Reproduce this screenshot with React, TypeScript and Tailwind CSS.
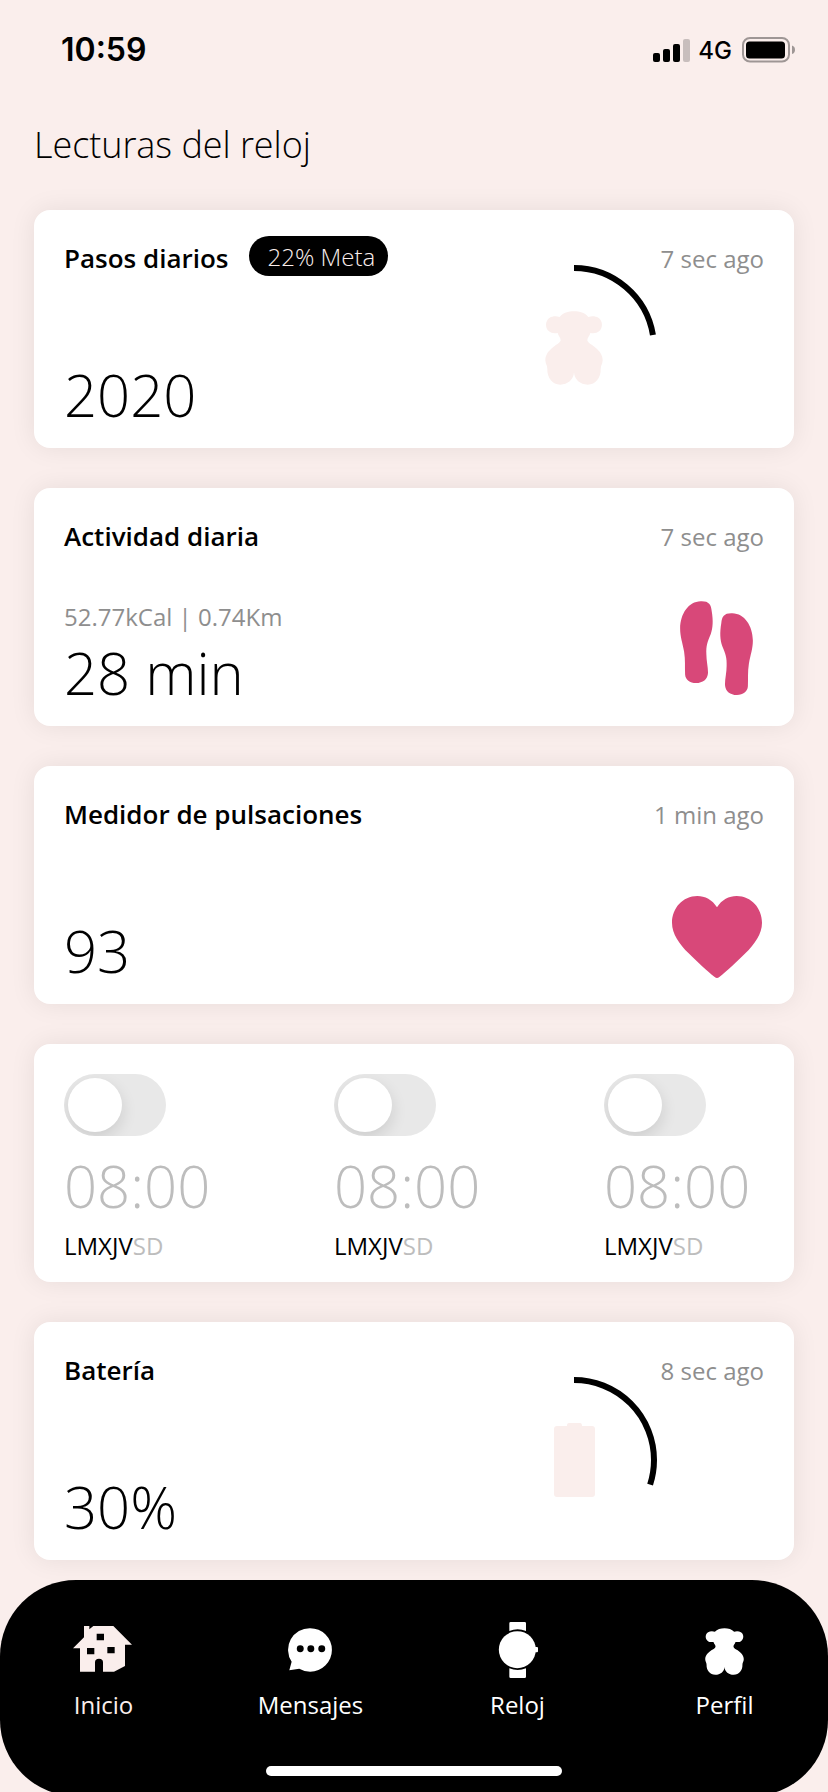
import type { ReactNode } from "react"
import { clsx } from "clsx"

const BEAR_PATH =
  "M44 18C54 6 70 1 87 1C104 1 120 6 130 18C140 14 152 15 160 20C174 29 174 50 163 60C155 68 144 67 136 66C135 74 127 79 127 88C128 95 138 100 144 104C160 116 173 128 173 148C173 158 167 163 167 174C168 200 152 221 128 221C106 221 88 206 87 184C86 206 68 221 46 221C22 221 6 200 7 174C7 163 1 158 1 148C1 128 14 116 30 104C36 100 46 95 47 88C47 79 39 74 38 66C30 67 19 68 11 60C0 50 0 29 14 20C22 15 34 14 44 18Z"

const FOOT_PATH =
  "M302 123C326 122 333 132 335 152C340 182 339 202 332 222C322 246 318 256 319 282C319 302 324 320 324 338C323 358 308 369 288 369C269 369 256 359 255 343C254 320 256 300 252 275C247 246 240 230 240 205C241 160 265 124 302 123Z"

function BearIcon({ className }: { className?: string }) {
  return (
    <svg viewBox="0 0 174 222" preserveAspectRatio="none" className={className} fill="currentColor">
      <path d={BEAR_PATH} />
    </svg>
  )
}

function HouseIcon() {
  return (
    <svg viewBox="219 198 177 138" className="mr-[2px] mb-[2px] w-[59px] h-[46px] text-[#faeeec]" fill="currentColor">
      <path
        fillRule="evenodd"
        d="M252 198H268V208L280 198H340L396 254H375V318L342 335H309V307Q309 296 297 296Q285 296 285 307V335H240V265H219L252 232ZM290 221V241H312V221ZM261 264V283H283V264ZM322 261V280H344V261Z"
      />
    </svg>
  )
}

function MessageIcon() {
  return (
    <svg viewBox="863 203 133 133" className="mr-[2px] w-[44px] h-[44px]">
      <path
        fill="white"
        d="M930 203.500A65.500 65.500 0 1 1 930 335Q912 335 897 326L867 331L874 305A65.500 65.500 0 0 1 930 203.500Z"
      />
      <circle cx="900" cy="266" r="10.500" />
      <circle cx="932" cy="266" r="10.500" />
      <circle cx="965" cy="266" r="10.500" />
    </svg>
  )
}

function WatchIcon() {
  return (
    <svg viewBox="246 186 123 168" className="w-[41px] h-[56px]" fill="white">
      <circle cx="307" cy="269" r="55.500" />
      <path d="M360 261H366Q369 261 369 264V274Q369 277 366 277H360Z" />
      <path d="M283 190Q283 186 287 186H329Q333 186 333 190V213Q308 203 283 213Z" />
      <path d="M283 350Q283 354 287 354H329Q333 354 333 350V325Q308 335 283 325Z" />
    </svg>
  )
}

function FootprintsIcon() {
  return (
    <svg viewBox="240 122 219 283" className="w-[73px] h-[94px]" fill="#d84879">
      <path d={FOOT_PATH} />
      <path d={FOOT_PATH} transform="translate(699 36) scale(-1 1)" />
    </svg>
  )
}

function HeartIcon() {
  return (
    <svg viewBox="156 348 270 246" className="mr-[2px] w-[90px] h-[82px]" fill="#d84879">
      <path d="M291 382C277 359 255 348 232 348C188 348 156 385 156 428C156 462 178 492 206 520C232 546 262 574 284 591Q291 597 298 591C320 574 350 546 376 520C404 492 426 462 426 428C426 385 394 348 350 348C327 348 305 359 291 382Z" />
    </svg>
  )
}

function ProgressRing({ percent, children }: { percent: number; children: ReactNode }) {
  return (
    <div className="grid w-[166px] h-[166px] shrink-0 place-items-center">
      <svg viewBox="0 0 166 166" className="col-start-1 row-start-1 w-full h-full" fill="none">
        <circle
          cx="83"
          cy="83"
          r="80"
          stroke="black"
          strokeWidth="6"
          pathLength="100"
          strokeDasharray={`${percent} 100`}
          transform="rotate(-90 83 83)"
        />
      </svg>
      <div className="col-start-1 row-start-1">{children}</div>
    </div>
  )
}

interface ReadingCardProps {
  title: string
  value: string
  ago: string
  goal?: string
  detail?: string
  ring?: ReactNode
  icon?: ReactNode
}

function ReadingCard({ title, value, ago, goal, detail, ring, icon }: ReadingCardProps) {
  return (
    <section className="flex h-[238px] rounded-2xl bg-white px-[30px] shadow-[0_0_26px_rgba(0,0,0,0.08)]">
      <div className="flex flex-1 flex-col pt-[26px] pb-[23px]">
        <div className="flex h-10">
          <h2 className="mt-[6px] text-[26px] leading-8 font-semibold whitespace-nowrap">{title}</h2>
          {goal && (
            <span className="ml-[20px] h-10 w-[139px] rounded-full bg-black pl-[19px] text-[24px] leading-[42px] font-light whitespace-nowrap text-[#faeeec]">
              {goal}
            </span>
          )}
        </div>
        <div className="mt-auto">
          {detail && <p className="mb-[10px] text-[24px] leading-8 text-[#8e8e8e]">{detail}</p>}
          <p className="text-[58px] leading-[60px] font-light">{value}</p>
        </div>
      </div>
      {ring && <div className="pt-[55px]">{ring}</div>}
      <div className="flex w-[107px] flex-col items-end justify-between pt-8 pb-[26px]">
        <span className="text-[24px] leading-[34px] whitespace-nowrap text-[#8e8e8e]">{ago}</span>
        {icon}
      </div>
    </section>
  )
}

function Alarm({ time }: { time: string }) {
  return (
    <div className="w-[270px] shrink-0">
      <div className="h-[62px] w-[102px] overflow-hidden rounded-full bg-[#e8e8e8] p-1">
        <div className="size-[54px] rounded-full bg-white shadow-[0_6px_16px_rgba(0,0,0,0.12)]" />
      </div>
      <p className="mt-[20px] text-[58px] leading-[60px] font-light text-[#bdbdbd]">{time}</p>
      <p className="mt-[14px] text-[24px] leading-8">
        LMXJV<span className="text-[#bdbdbd]">SD</span>
      </p>
    </div>
  )
}

function StatusBar() {
  return (
    <div className="flex h-[100px] shrink-0 items-center pl-[61px] pr-[33px] font-['Inter',sans-serif]">
      <span className="text-[32px] font-semibold">10:59</span>
      <div className="ml-auto flex items-end gap-[3px]">
        <span className="h-[9px] w-[7px] rounded-[2px] bg-black" />
        <span className="h-[13px] w-[7px] rounded-[2px] bg-black" />
        <span className="h-[18px] w-[7px] rounded-[2px] bg-black" />
        <span className="h-[23px] w-[7px] rounded-[2px] bg-[#c8bebd]" />
      </div>
      <span className="ml-2 mt-px text-[24px] font-medium">4G</span>
      <svg viewBox="0 0 53 26" className="ml-[10px] h-[26px] w-[53px]">
        <rect x="1" y="1" width="46" height="23.500" rx="7" fill="none" stroke="#9e9695" strokeWidth="2" />
        <rect x="4" y="4.500" width="39" height="17" rx="3.500" />
        <path d="M50 8.500Q53 9.500 53 12.700Q53 16 50 17Z" fill="#9e9695" />
      </svg>
    </div>
  )
}

const tabs = [
  { label: "Inicio", icon: <HouseIcon />, active: true },
  { label: "Mensajes", icon: <MessageIcon /> },
  { label: "Reloj", icon: <WatchIcon /> },
  { label: "Perfil", icon: <BearIcon className="h-[47px] w-[39px] mt-[3px]" /> },
]

function TabBar() {
  return (
    <nav className="mt-5 flex h-[216px] shrink-0 flex-col items-center rounded-[76px] bg-black pt-[42px] text-white">
      <div className="grid w-full grid-cols-4">
        {tabs.map((tab) => (
          <div key={tab.label} className="flex flex-col items-center">
            <div className="flex h-14 items-center">{tab.icon}</div>
            <span className={clsx("mt-[11px] text-[24px] leading-8", tab.active && "text-[#faeeec]")}>
              {tab.label}
            </span>
          </div>
        ))}
      </div>
      <div className="mt-[45px] h-[10px] w-[296px] rounded-full bg-white" />
    </nav>
  )
}

export default function App() {
  return (
    <div className="flex h-[1792px] w-[828px] flex-col overflow-hidden bg-[#faeeec] font-['Open_Sans',sans-serif] text-black">
      <StatusBar />
      <h1 className="mt-[25px] px-[34px] text-[36px] leading-10 font-light tracking-[-0.05px]">Lecturas del reloj</h1>
      <main className="mt-[45px] flex shrink-0 flex-col gap-10 px-[34px]">
        <ReadingCard
          title="Pasos diarios"
          goal="22% Meta"
          value="2020"
          ago="7 sec ago"
          ring={
            <ProgressRing percent={22.4}>
              <BearIcon className="h-[74px] w-[58px] text-[#faeeec]" />
            </ProgressRing>
          }
        />
        <ReadingCard
          title="Actividad diaria"
          detail="52.77kCal | 0.74Km"
          value="28 min"
          ago="7 sec ago"
          icon={
            <div className="mb-[5px] mr-[11px]">
              <FootprintsIcon />
            </div>
          }
        />
        <ReadingCard title="Medidor de pulsaciones" value="93" ago="1 min ago" icon={<HeartIcon />} />
        <section className="flex h-[238px] overflow-hidden rounded-2xl bg-white pt-[30px] pl-[30px] shadow-[0_0_26px_rgba(0,0,0,0.08)]">
          <Alarm time="08:00" />
          <Alarm time="08:00" />
          <Alarm time="08:00" />
        </section>
        <ReadingCard
          title="Batería"
          value="30%"
          ago="8 sec ago"
          ring={
            <ProgressRing percent={30}>
              <svg viewBox="0 0 41 74" className="h-[74px] w-[41px]" fill="#faeeec">
                <path d="M13 2Q13 0 15 0H26Q28 0 28 3H38Q41 3 41 6V71Q41 74 38 74H3Q0 74 0 71V6Q0 3 3 3H13Z" />
              </svg>
            </ProgressRing>
          }
        />
      </main>
      <TabBar />
    </div>
  )
}
